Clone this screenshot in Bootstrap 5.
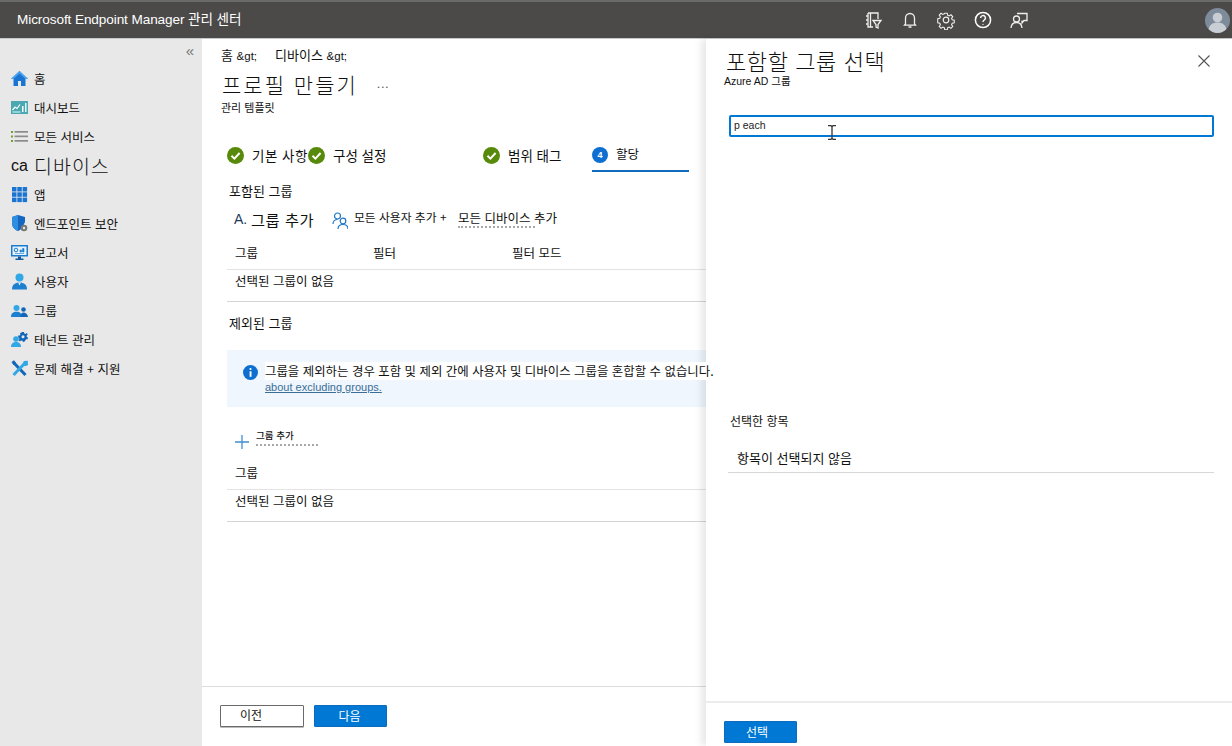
<!DOCTYPE html>
<html lang="ko">

<head>
    <meta charset="UTF-8">
    <title>Microsoft Endpoint Manager 관리 센터</title>
    <link href="https://cdn.jsdelivr.net/npm/bootstrap@5.3.0/dist/css/bootstrap.min.css" rel="stylesheet">
    <style>
        html, body { height: 746px; overflow: hidden; }
        body { font-family: "Noto Sans CJK KR", "Noto Sans", sans-serif; font-size: 12.5px; color: #111; background: #fff; line-height: 1.2; }
        .latin { font-family: "Liberation Sans", "Noto Sans CJK KR", sans-serif; }

        /* 상단 바 */
        .top-bar { height: 39px; background: #4b4a48; border-top: 2px solid #6a6a68; border-bottom: 1px solid #c8c8c8; color: #fff; padding-left: 17px; padding-right: 2px; }
        .top-title { font-size: 13.6px; letter-spacing: -.1px; }
        .top-icons { gap: 16.5px; margin-right: 176px; margin-left: auto; }
        .top-icons svg { width: 20px; height: 20px; display: block; }
        .avatar { width: 25px; height: 25px; border-radius: 50%; background: #7d8b9b; overflow: hidden; }

        /* 왼쪽 메뉴 */
        .page-wrap { height: 707px; }
        .side-nav { width: 202px; background: #e8e8e8; flex-shrink: 0; padding-top: 5px; }
        .collapse-btn { height: 20px; padding-right: 8px; color: #777; font-size: 15px; line-height: 14px; text-align: right; }
        .nav-row { height: 29px; padding-left: 11px; gap: 6px; }
        .nav-row svg { width: 17px; height: 17px; flex-shrink: 0; }
        .nav-ca { width: 17px; font-size: 16px; line-height: 17px; font-family: "Liberation Sans", sans-serif; }
        .nav-big { font-size: 19.5px; letter-spacing: 1px; font-weight: 300; }

        /* 본문 */
        .main-pane { width: 504px; flex-shrink: 0; }
        .main-scroll { padding: 8px 0 0 19px; height: 647px; }
        .crumb-line { font-size: 13px; line-height: 15px; }
        .crumb-line .latin { font-size: 11.5px; }
        .crumb-gap { width: 18px; }
        .page-title { font-size: 21px; font-weight: 300; letter-spacing: 2px; margin: 6px 0 0 1px; line-height: 27px; }
        .title-more { font-size: 13px; margin-left: 19px; letter-spacing: .5px; color: #555; vertical-align: 5px; }
        .page-sub { font-size: 11px; margin-top: 2px; line-height: 14px; }
        .step-row { margin: 31px 0 0 6px; height: 27px; font-size: 13.5px; }
        .step-item { height: 27px; padding-bottom: 7px; gap: 8px; }
        .step-item svg { width: 17px; height: 17px; }
        .step-one { width: 81px; letter-spacing: .5px; }
        .step-two { width: 175px; }
        .step-three { width: 109px; }
        .step-four { width: 97px; border-bottom: 2px solid #0f6cbd; padding-bottom: 5px; font-size: 12.5px; }
        .step-four span { margin-top: -4px; }
        .step-dot { width: 16px; height: 16px; border-radius: 50%; background: #0f6fd1; color: #fff; font-size: 9px; font-weight: 700; line-height: 16px; text-align: center; }
        .group-head { font-size: 13px; margin: 11px 0 0 8px; line-height: 15px; }
        .group-gap { margin-top: 13px; }
        .tool-row { margin: 10px 0 0 13px; height: 22px; }
        .tool-a { font-size: 14px; color: #1b3a5c; width: 17px; }
        .tool-add { font-size: 15.3px; width: 81px; letter-spacing: .5px; }
        .tool-user { width: 22px; }
        .tool-user svg { width: 16px; height: 18px; margin-top: 3px; display: block; }
        .tool-all { font-size: 11.8px; width: 104px; margin-top: -3px; }
        .tool-dev { font-size: 12.5px; margin-top: -1px; line-height: 15px; }
        .ghost-line { display: block; height: 3px; border-bottom: 2px dotted #a8a8a8; }
        .ghost-dev { width: 77px; }
        .ghost-add { width: 62px; }
        .grid-head, .grid-row { margin-left: 6px; padding-left: 8px; }
        .grid-head { height: 30px; margin-top: 10px; border-bottom: 1px solid #e3e3e3; padding-top: 5px; }
        .grid-row { height: 32px; border-bottom: 1px solid #d4d4d4; padding-top: 3px; }
        .col-group { width: 138px; }
        .col-filter { width: 139px; }
        .info-box { margin: 20px 0 0 6px; height: 57px; background: #eff6fe; padding: 13px 0 0 16px; gap: 7px; }
        .info-box svg { width: 15px; height: 15px; margin-top: 2px; flex-shrink: 0; }
        .info-text { background: #fff; white-space: nowrap; font-size: 12.43px; line-height: 15px; position: relative; z-index: 3; }
        .info-link { display: block; font-size: 11px; color: #3b6e95; line-height: 14px; margin-top: 1px; text-decoration: underline; font-family: "Liberation Sans", sans-serif; }
        .add-row { margin: 21px 0 0 14px; height: 22px; gap: 7px; }
        .add-row svg { width: 14px; height: 14px; margin-top: 7px; flex-shrink: 0; }
        .add-main { font-size: 9.5px; line-height: 9px; display: block; font-weight: 500; margin-top: 3px; margin-bottom: 3px; }
        .foot-bar { height: 60px; border-top: 1px solid #dcdcdc; padding: 18px 0 0 18px; gap: 10px; }
        .btn-prev, .btn-blue { height: 22px; border-radius: 1px; font-size: 12px; padding: 0; }
        .btn-prev { width: 84px; background: #fff; border: 1px solid #6a6a6a; box-shadow: 0 1px 0 #bbb; color: #111; padding: 0 22px 3px 0; }
        .btn-blue { width: 73px; background: #0078d4; border: 1px solid #0b6bbd; color: #fff; padding: 0 2px 1px 0; }
        .btn-blue:hover { background: #0078d4; color: #fff; }

        /* 오른쪽 패널 */
        .side-panel { flex: 1; background: #fff; box-shadow: -5px 0 7px rgba(0, 0, 0, .09); position: relative; z-index: 2; }
        .panel-head { height: 65px; padding: 7px 20px 0 20px; }
        .panel-title { font-size: 22px; font-weight: 300; letter-spacing: .6px; line-height: 28px; margin: 0; }
        .panel-sub { font-size: 10.5px; line-height: 13px; margin-left: -2px; }
        .panel-close { width: 14px; height: 14px; margin: 8px 1px 0 0; }
        .search-wrap { padding: 11px 18px 0 23px; position: relative; }
        .search-box { height: 22px; width: 485px; border: 2px solid #0078d4; border-radius: 2px; padding: 0 0 2px 3px; font-size: 10.5px; color: #222; box-shadow: none; outline: 0; font-family: "Liberation Sans", sans-serif; }
        .text-cursor { position: absolute; left: 121px; top: 21px; width: 10px; height: 15px; }
        .chosen-head { margin: 276px 0 0 24px; font-size: 12px; line-height: 15px; }
        .chosen-row { margin: 15px 18px 0 22px; height: 30px; border-bottom: 1px solid #d8d8d8; padding: 0 0 0 9px; font-size: 13px; line-height: 29px; }
        .panel-foot { margin-top: 228px; height: 44px; border-top: 2px solid #ececec; padding: 18px 0 0 18px; }
        .panel-foot .btn-blue { padding: 0 7px 1px 0; }
    </style>
</head>

<body>
    <!-- 상단 바 -->
    <header class="top-bar d-flex align-items-center">
        <div class="top-title latin">Microsoft Endpoint Manager 관리 센터</div>
        <div class="top-icons d-flex align-items-center">
            <svg viewBox="0 0 20 20" fill="none" stroke="#eee" stroke-width="1.3"><path d="M5 3h10v6M5 3v14h5M7.5 3v14M3 6h2M3 10h2M3 14h2"/><path d="M10 10.500h8l-3 4v3.500l-2-1v-2.500z" fill="#4b4a48"/></svg>
            <svg viewBox="0 0 20 20" fill="none" stroke="#eee" stroke-width="1.3"><path d="M5.500 14V8a4.500 4.500 0 0 1 9 0v6l1 1.200h-11zM8.500 17h3"/></svg>
            <svg viewBox="0 0 20 20" fill="none" stroke="#eee" stroke-width="1.200"><circle cx="10" cy="10" r="2.800"/><path d="M8.600 2.500h2.800l.5 2.300 1.600.7 2-1.300 2 2-1.300 2 .7 1.600 2.300.5v2.800l-2.300.5-.7 1.600 1.300 2-2 2-2-1.300-1.600.7-.5 2.300H8.600l-.5-2.300-1.600-.7-2 1.300-2-2 1.300-2-.7-1.600-2.300-.5V8.600l2.300-.5.7-1.600-1.300-2 2-2 2 1.300 1.600-.7z" transform="translate(1 1) scale(.9)"/></svg>
            <svg viewBox="0 0 20 20" fill="none" stroke="#fff" stroke-width="1.500"><circle cx="10" cy="10" r="7.600"/><path d="M7.600 8a2.400 2.400 0 1 1 3.600 2c-.9.6-1.200 1-1.200 2" stroke-width="1.400"/><circle cx="10" cy="14.400" r=".6" fill="#fff" stroke="none"/></svg>
            <svg viewBox="0 0 20 20" fill="none" stroke="#eee" stroke-width="1.300"><path d="M8 3.500h10v7h-3l-2 2.500v-2.500"/><circle cx="7.500" cy="9" r="3"/><path d="M2 18c.3-3.500 2.500-5.500 5.500-5.500S12.700 14.500 13 18"/></svg>
        </div>
        <div class="avatar">
            <svg viewBox="0 0 25 25" width="25" height="25"><circle cx="12.500" cy="9.500" r="4.800" fill="#c9ced4"/><path d="M3.500 22c.5-5 4-7.500 9-7.500s8.500 2.500 9 7.500v3h-18z" fill="#c9ced4"/></svg>
        </div>
    </header>

    <div class="page-wrap d-flex">
        <!-- 왼쪽 메뉴 -->
        <nav class="side-nav">
            <div class="collapse-btn latin">«</div>
            <div class="nav-row d-flex align-items-center">
                <svg viewBox="0 0 17 17"><path d="M8.500 1 0 9h2.500v7h4.500v-5h3v5h4.500V9H17z" fill="#1a74d2"/><path d="M8.500 1 0 9h2.500l6-5.500 6 5.500H17z" fill="#4aa3ee"/></svg>
                <span>홈</span>
            </div>
            <div class="nav-row d-flex align-items-center">
                <svg viewBox="0 0 17 17"><rect y="2" width="17" height="13" fill="#4ba8b0"/><path d="M1.500 11 4 8l2 1.500 3-4" fill="none" stroke="#fff" stroke-width="1.200"/><path d="M1.500 13h8" stroke="#dff" stroke-width="1"/><rect x="11" y="7" width="1.500" height="6" fill="#fff"/><rect x="14" y="4" width="1.500" height="9" fill="#dff"/></svg>
                <span>대시보드</span>
            </div>
            <div class="nav-row d-flex align-items-center">
                <svg viewBox="0 0 17 17"><g fill="#6fa52b"><rect y="3" width="2" height="2"/><rect y="7.500" width="2" height="2"/><rect y="12" width="2" height="2"/></g><g fill="#8b8b8b"><rect x="3.500" y="3" width="13.500" height="1.700"/><rect x="3.500" y="7.500" width="13.500" height="1.700"/><rect x="3.500" y="12" width="13.500" height="1.700"/></g></svg>
                <span>모든 서비스</span>
            </div>
            <div class="nav-row d-flex align-items-center">
                <span class="nav-ca">ca</span>
                <span class="nav-big">디바이스</span>
            </div>
            <div class="nav-row d-flex align-items-center">
                <svg viewBox="0 0 17 17"><g fill="#1a74d2"><rect x="1" y="1" width="4.500" height="4.500"/><rect x="6.300" y="1" width="4.500" height="4.500"/><rect x="11.600" y="1" width="4.500" height="4.500"/><rect x="1" y="6.300" width="4.500" height="4.500"/><rect x="6.300" y="6.300" width="4.500" height="4.500"/><rect x="11.600" y="6.300" width="4.500" height="4.500"/><rect x="1" y="11.600" width="4.500" height="4.500"/><rect x="6.300" y="11.600" width="4.500" height="4.500"/><rect x="11.600" y="11.600" width="4.500" height="4.500"/></g></svg>
                <span>앱</span>
            </div>
            <div class="nav-row d-flex align-items-center">
                <svg viewBox="0 0 17 17"><path d="M7 0 1 2v6c0 4 2.500 6.500 6 8 1.500-.6 3-1.700 4-3l3-6V2z" fill="#1566c0"/><path d="M7 0 1 2v6c0 4 2.500 6.500 6 8z" fill="#2f8ee0"/><circle cx="13" cy="13" r="3.300" fill="#777"/><circle cx="13" cy="13" r="1.200" fill="#e8e8e8"/></svg>
                <span>엔드포인트 보안</span>
            </div>
            <div class="nav-row d-flex align-items-center">
                <svg viewBox="0 0 17 17"><rect x="0" y="1" width="17" height="11.500" fill="#1b7ccf"/><rect x="1.500" y="2.500" width="14" height="8.500" fill="#e6f3fc"/><circle cx="5" cy="6" r="1.800" fill="none" stroke="#1b7ccf" stroke-width="1"/><path d="M9 8V6h1.500v2zM11.500 8V4.500H13V8zM4 9.500h9" stroke="#1b7ccf" fill="#1b7ccf" stroke-width=".6"/><path d="M7 12.500h3v2h2.500V16h-8v-1.500H7z" fill="#125a9c"/></svg>
                <span>보고서</span>
            </div>
            <div class="nav-row d-flex align-items-center">
                <svg viewBox="0 0 17 17"><circle cx="8.500" cy="4.500" r="4" fill="#32a7e6"/><path d="M1 16.500c0-5 3-7 7.500-7s7.500 2 7.500 7z" fill="#1c7fd0"/><path d="M7 9.500h3l-1.500 3z" fill="#d9f0fc"/></svg>
                <span>사용자</span>
            </div>
            <div class="nav-row d-flex align-items-center">
                <svg viewBox="0 0 17 17"><circle cx="5.500" cy="6" r="3" fill="#32a7e6"/><path d="M0 15c0-3.800 2.200-5.300 5.500-5.300S11 11.200 11 15z" fill="#1c7fd0"/><circle cx="12.500" cy="7.500" r="2.300" fill="#1467b8"/><path d="M9.500 15c.2-3 1-4.500 3-4.500s4.200 1.500 4.500 4.500z" fill="#1467b8"/></svg>
                <span>그룹</span>
            </div>
            <div class="nav-row d-flex align-items-center">
                <svg viewBox="0 0 17 17"><circle cx="5" cy="8" r="2.800" fill="#32a7e6"/><path d="M0 16c0-3.500 2-5 5-5s5 1.500 5 5z" fill="#32a7e6"/><path d="M11 1h2l.3 1.400 1.200.5 1.300-.8 1 1.500-1.100 1 .1 1.300L17 6.500l-.4 1.800-1.400-.1-.8 1-.7 1.200-1.700.6-.6-1.300-1.400-.2-1 1-1.400-1.200.8-1.200-.4-1.300L7 6.300l.3-1.800 1.400.1.800-1.100-.6-1.300L10.500 1.500z" fill="#1467b8"/><circle cx="12" cy="5.700" r="1.500" fill="#e8e8e8"/></svg>
                <span>테넌트 관리</span>
            </div>
            <div class="nav-row d-flex align-items-center">
                <svg viewBox="0 0 17 17" fill="none"><path d="M2.500 2.500 14.500 15" stroke="#1467b8" stroke-width="3"/><path d="M.5 2 3 .3l2 2.500L2.600 5z" fill="#1467b8"/><path d="M14.500 2.500 2.500 15" stroke="#32a7e6" stroke-width="3"/><path d="M16.800 .8 12.800 1 11.800 4.500l2.500 1.700 2.700-1.200z" fill="#32a7e6"/></svg>
                <span>문제 해결 + 지원</span>
            </div>
        </nav>

        <!-- 본문 -->
        <main class="main-pane d-flex flex-column">
            <div class="main-scroll">
                <div class="crumb-line d-flex"><span>홈 <span class="latin">&amp;gt;</span></span><span class="crumb-gap"></span><span>디바이스 <span class="latin">&amp;gt;</span></span></div>
                <h1 class="page-title">프로필 만들기<span class="title-more latin">...</span></h1>
                <div class="page-sub">관리 템플릿</div>

                <div class="step-row d-flex">
                    <div class="step-item step-one d-flex align-items-center">
                        <svg viewBox="0 0 17 17"><circle cx="8.500" cy="8.500" r="8.500" fill="#578a0a"/><path d="M4.500 8.800 7.400 11.600 12.600 6" fill="none" stroke="#fff" stroke-width="2"/></svg>
                        <span>기본 사항</span>
                    </div>
                    <div class="step-item step-two d-flex align-items-center">
                        <svg viewBox="0 0 17 17"><circle cx="8.500" cy="8.500" r="8.500" fill="#578a0a"/><path d="M4.500 8.800 7.400 11.600 12.600 6" fill="none" stroke="#fff" stroke-width="2"/></svg>
                        <span>구성 설정</span>
                    </div>
                    <div class="step-item step-three d-flex align-items-center">
                        <svg viewBox="0 0 17 17"><circle cx="8.500" cy="8.500" r="8.500" fill="#578a0a"/><path d="M4.500 8.800 7.400 11.600 12.600 6" fill="none" stroke="#fff" stroke-width="2"/></svg>
                        <span>범위 태그</span>
                    </div>
                    <div class="step-item step-four d-flex align-items-center">
                        <div class="step-dot latin">4</div>
                        <span>할당</span>
                    </div>
                </div>

                <div class="group-head">포함된 그룹</div>
                <div class="tool-row d-flex align-items-center">
                    <span class="tool-a latin">A.</span>
                    <span class="tool-add">그룹 추가</span>
                    <span class="tool-user">
                        <svg viewBox="0 0 16 18" fill="none" stroke="#1f78c8" stroke-width="1.200"><circle cx="5.500" cy="4" r="3"/><path d="M1 12c0-3 2-4.500 4.500-4.500"/><circle cx="11" cy="9" r="2.800"/><path d="M6 17c0-3 2-4.500 5-4.500s5 1.500 5 4.500"/></svg>
                    </span>
                    <span class="tool-all">모든 사용자 추가 +</span>
                    <span class="tool-dev">모든 디바이스 추가<span class="ghost-line ghost-dev"></span></span>
                </div>

                <div class="grid-head d-flex">
                    <span class="col-group">그룹</span><span class="col-filter">필터</span><span>필터 모드</span>
                </div>
                <div class="grid-row">선택된 그룹이 없음</div>

                <div class="group-head group-gap">제외된 그룹</div>
                <div class="info-box d-flex">
                    <svg viewBox="0 0 15 15"><circle cx="7.500" cy="7.500" r="7.500" fill="#0f6fd1"/><rect x="6.600" y="6.300" width="1.900" height="5.500" fill="#fff"/><circle cx="7.500" cy="4" r="1.100" fill="#fff"/></svg>
                    <div>
                        <span class="info-text">그룹을 제외하는 경우 포함 및 제외 간에 사용자 및 디바이스 그룹을 혼합할 수 없습니다.</span>
                        <a class="info-link" href="#">about excluding groups.</a>
                    </div>
                </div>

                <div class="add-row d-flex">
                    <svg viewBox="0 0 14 14"><path d="M7 0v14M0 7h14" stroke="#3f8fd4" stroke-width="1.300"/></svg>
                    <div>
                        <span class="add-main">그룹 추가</span>
                        <span class="ghost-line ghost-add"></span>
                    </div>
                </div>

                <div class="grid-head d-flex"><span class="col-group">그룹</span></div>
                <div class="grid-row">선택된 그룹이 없음</div>
            </div>

            <div class="foot-bar d-flex">
                <button type="button" class="btn btn-prev">이전</button>
                <button type="button" class="btn btn-blue">다음</button>
            </div>
        </main>

        <!-- 오른쪽 패널 -->
        <aside class="side-panel">
            <div class="panel-head d-flex justify-content-between">
                <div>
                    <h2 class="panel-title">포함할 그룹 선택</h2>
                    <div class="panel-sub"><span class="latin">Azure AD</span> 그룹</div>
                </div>
                <svg class="panel-close" viewBox="0 0 14 14"><path d="M1.500 1.500 12.500 12.500M12.500 1.500 1.500 12.500" stroke="#555" stroke-width="1.100"/></svg>
            </div>
            <div class="search-wrap">
                <input class="form-control search-box" type="text" value="p each">
                <svg class="text-cursor" viewBox="0 0 10 15" fill="none" stroke="#333" stroke-width="1.300"><path d="M1 .7h3l1 1 1-1h3M5 1.700v11.600M1 14.300h3l1-1 1 1h3"/></svg>
            </div>
            <div class="chosen-head">선택한 항목</div>
            <div class="chosen-row">항목이 선택되지 않음</div>
            <div class="panel-foot">
                <button type="button" class="btn btn-blue">선택</button>
            </div>
        </aside>
    </div>

    <script src="https://cdn.jsdelivr.net/npm/bootstrap@5.3.0/dist/js/bootstrap.bundle.min.js"></script>
</body>

</html>
